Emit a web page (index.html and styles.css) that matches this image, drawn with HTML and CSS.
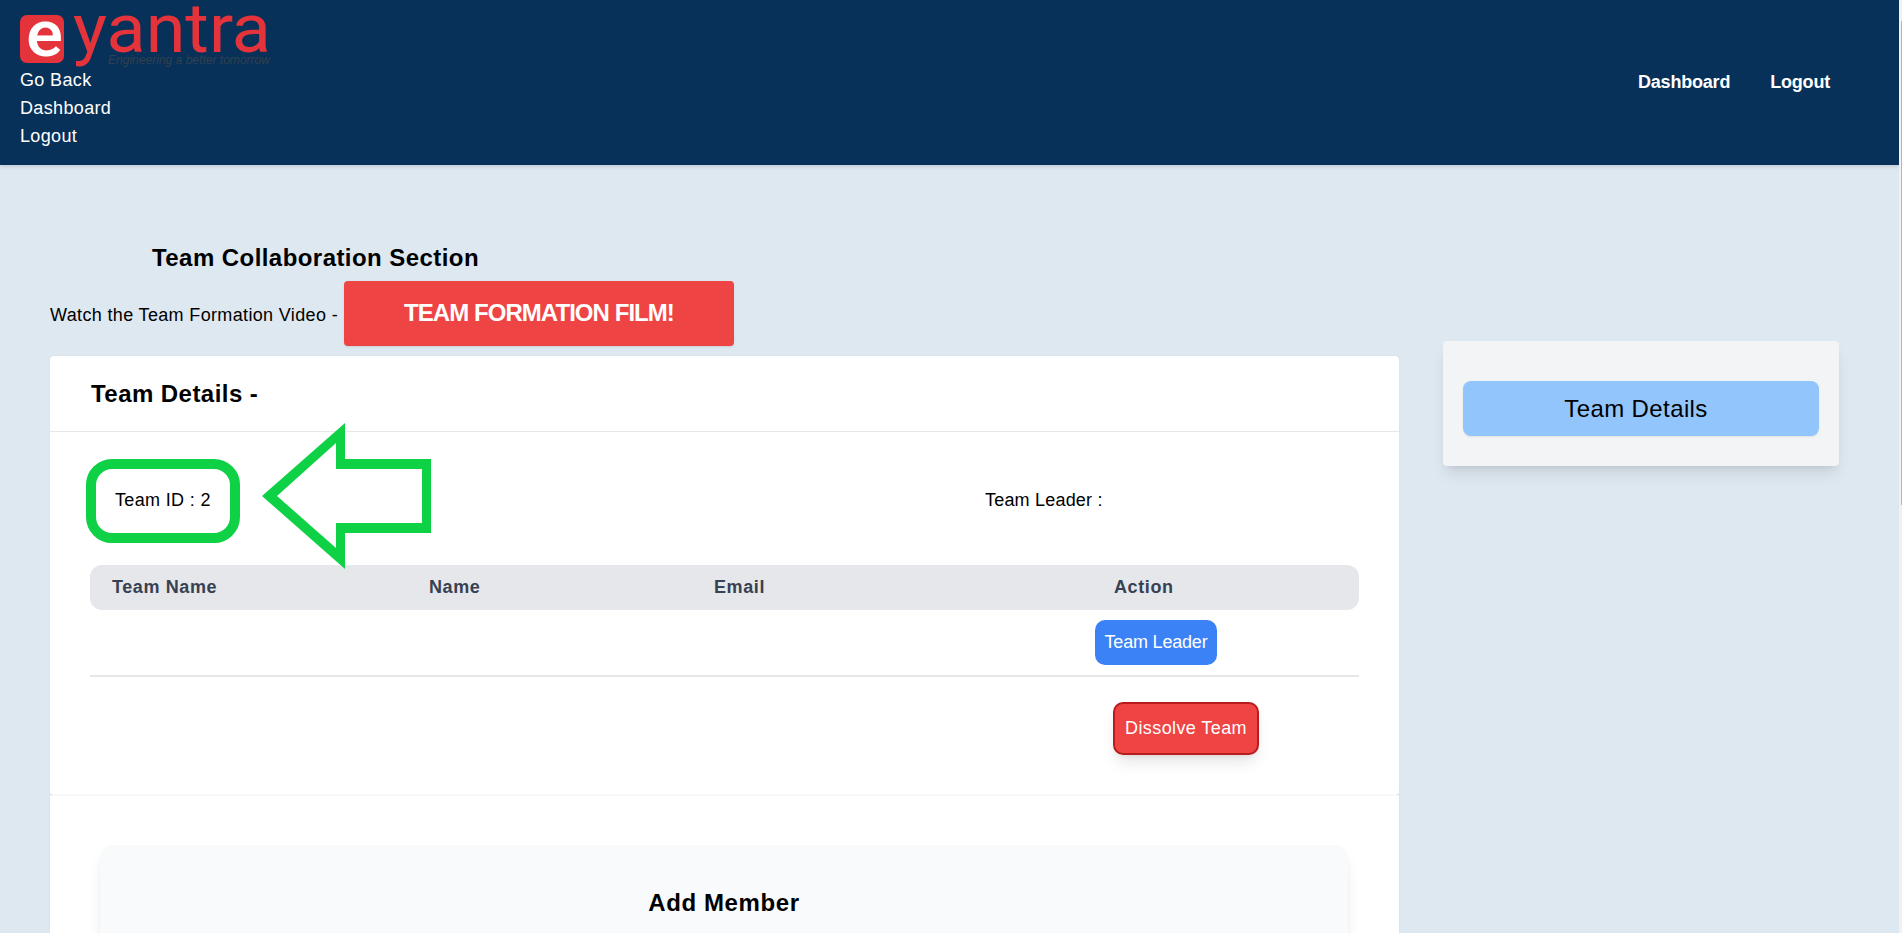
FILE: index.html
```html
<!DOCTYPE html>
<html lang="en">
<head>
<meta charset="utf-8">
<title>Team Collaboration Section</title>
<link rel="stylesheet" href="styles.css">
</head>
<body>
<div class="viewport">
  <div class="page">
    <header class="topbar">
      <div class="brand">
        <svg class="logo" viewBox="0 0 250 48" width="250" height="48" aria-label="e-Yantra logo">
          <rect class="logo-box" x="0" y="0" width="44" height="48" rx="7"/>
          <text class="logo-e" x="6" y="41" textLength="37" lengthAdjust="spacingAndGlyphs">e</text>
          <text class="logo-word" x="53" y="37" textLength="198" lengthAdjust="spacingAndGlyphs">yantra</text>
          <text class="logo-tag" x="88" y="49" textLength="162" lengthAdjust="spacingAndGlyphs">Engineering a better tomorrow</text>
        </svg>
        <nav class="side-links">
          <a>Go Back</a>
          <a>Dashboard</a>
          <a>Logout</a>
        </nav>
      </div>
      <nav class="top-links">
        <a>Dashboard</a>
        <a>Logout</a>
      </nav>
    </header>

    <main class="layout">
      <section class="content">
        <h1 class="page-title">Team Collaboration Section</h1>
        <div class="video-row">
          <span class="video-label">Watch the Team Formation Video -</span>
          <button class="film-btn">TEAM FORMATION FILM!</button>
        </div>

        <article class="card">
          <h2 class="card-title">Team Details -</h2>
          <div class="card-body">
            <div class="team-info">
              <span>Team ID : 2</span>
              <span>Team Leader :</span>
            </div>
            <div class="table-head">
              <span>Team Name</span>
              <span>Name</span>
              <span>Email</span>
              <span>Action</span>
            </div>
            <div class="table-row">
              <button class="leader-btn">Team Leader</button>
            </div>
            <div class="dissolve-row">
              <button class="dissolve-btn">Dissolve Team</button>
            </div>
          </div>
          <svg class="annotation" width="400" height="230" viewBox="0 0 400 230" aria-hidden="true">
            <rect class="mark" x="41" y="108" width="144" height="74" rx="21"/>
            <path class="arrow" fill-rule="evenodd" d="M212 140 L295 67 L295 103 L381 103 L381 177 L295 177 L295 213 Z M227 140 L286 192 L286 167 L372 167 L372 113 L286 113 L286 87 Z"/>
          </svg>
        </article>

        <article class="card add-section">
          <div class="add-card">
            <h2 class="add-title">Add Member</h2>
          </div>
        </article>
      </section>

      <aside class="sidebar">
        <button class="side-btn">Team Details</button>
      </aside>
    </main>
  </div>
  <div class="scrollbar"><div class="thumb"></div></div>
</div>
</body>
</html>
```

FILE: styles.css
```css
* { box-sizing: border-box; }
html, body { margin: 0; height: 100%; overflow: hidden; }
body { font-family: "Liberation Sans", Arial, sans-serif; font-size: 18px; color: #000; background: #f1f1f1; }
button { font-family: inherit; border: 0; cursor: pointer; }
h1, h2 { margin: 0; }

.viewport { display: flex; height: 933px; overflow: hidden; }
.page { width: 1899px; flex: none; background: #dee8f1; overflow: hidden; }
.scrollbar { width: 3px; flex: none; background: #f1f1f1; padding: 21px 0 0 2px; }
.thumb { width: 1px; height: 484px; background: #b5b5b5; }

.topbar { height: 165px; background: #073158; padding: 15px 69px 0 20px; display: flex; justify-content: space-between; box-shadow: 0 2px 4px rgba(0,0,0,.12); position: relative; }
.logo { display: block; overflow: visible; }
.logo-box { fill: #e5333b; }
.logo-e { fill: #fff; font: 500 64px Roboto, sans-serif; }
.logo-word { fill: #e5333b; font: 400 68px Roboto, sans-serif; }
.logo-tag { fill: #33404f; font: italic 400 12px "Liberation Sans", sans-serif; }
.side-links { display: flex; flex-direction: column; margin-top: 3px; color: #fff; line-height: 28px; letter-spacing: .35px; }
.top-links { display: flex; gap: 40px; margin-top: 53px; height: 28px; line-height: 28px; font-weight: 700; color: #fff; letter-spacing: -.2px; }

.layout { display: flex; align-items: flex-start; gap: 44px; padding: 0 0 0 50px; }
.content { width: 1349px; flex: none; padding-top: 77px; }
.page-title { font-size: 24px; line-height: 32px; padding-left: 102px; letter-spacing: .44px; }
.video-row { display: flex; align-items: center; gap: 6px; margin-top: 7px; height: 65px; }
.video-label { padding-top: 3px; letter-spacing: .35px; }
.film-btn { width: 390px; height: 65px; padding-bottom: 2px; background: #ef4444; color: #fff; font-size: 24px; letter-spacing: -.95px; font-weight: 700; border-radius: 4px; box-shadow: 0 1px 2px rgba(0,0,0,.1); }

.card { position: relative; background: #fff; border-radius: 4px; margin-top: 10px; box-shadow: 0 0 2px rgba(0,0,0,.06); }
.card-title { font-size: 24px; line-height: 32px; padding: 22px 41px 21px; border-bottom: 1px solid #e5e7eb; letter-spacing: .45px; }
.card-body { padding: 0 40px 39px; height: 363px; }
.team-info { height: 133px; display: grid; grid-template-columns: 870px 1fr; align-items: center; padding: 4px 0 0 25px; letter-spacing: .35px; }
.team-info span:last-child { letter-spacing: .2px; }
.table-head { height: 45px; background: #e5e7eb; border-radius: 12px; display: grid; grid-template-columns: 317px 285px 400px 1fr; align-items: center; padding-left: 22px; font-weight: 700; color: #374151; letter-spacing: .6px; }
.table-row { height: 67px; display: flex; justify-content: flex-end; align-items: flex-start; padding: 10px 142px 0 0; border-bottom: 2px solid #e5e7eb; }
.leader-btn { width: 122px; height: 45px; background: #3b82f6; color: #fff; font-size: 18px; letter-spacing: -.2px; border-radius: 10px; }
.dissolve-row { display: flex; justify-content: flex-end; padding: 25px 100px 0 0; }
.dissolve-btn { width: 146px; height: 53px; padding: 0; background: #ef4444; color: #fff; font-size: 18px; letter-spacing: .4px; border: 2px solid #b91c1c; border-radius: 10px; box-shadow: 0 10px 15px -3px rgba(0,0,0,.1), 0 4px 6px -4px rgba(0,0,0,.1); }

.annotation { position: absolute; left: 0; top: 0; overflow: visible; pointer-events: none; }
.mark { fill: none; stroke: #0ed145; stroke-width: 10; }
.arrow { fill: #0ed145; }

.add-section { margin-top: 0; border-top: 1px solid #f5f6f7; border-radius: 0; height: 300px; padding: 49px 51px 0 50px; }
.add-card { background: #f9fafb; border-radius: 14px; height: 300px; box-shadow: 0 10px 15px -3px rgba(0,0,0,.1), 0 4px 6px -4px rgba(0,0,0,.1); padding-top: 42px; }
.add-title { font-size: 24px; line-height: 32px; text-align: center; letter-spacing: .6px; }

.sidebar { width: 396px; flex: none; margin-top: 176px; height: 125px; background: #f3f4f6; border-radius: 4px; padding: 40px 20px; box-shadow: 0 10px 15px -3px rgba(0,0,0,.1), 0 4px 6px -4px rgba(0,0,0,.1); }
.side-btn { width: 356px; height: 55px; background: #93c5fd; color: #000; font-size: 24px; letter-spacing: .4px; border-radius: 8px; padding: 0 10px 0 0; box-shadow: 0 1px 2px rgba(0,0,0,.08); }
```
